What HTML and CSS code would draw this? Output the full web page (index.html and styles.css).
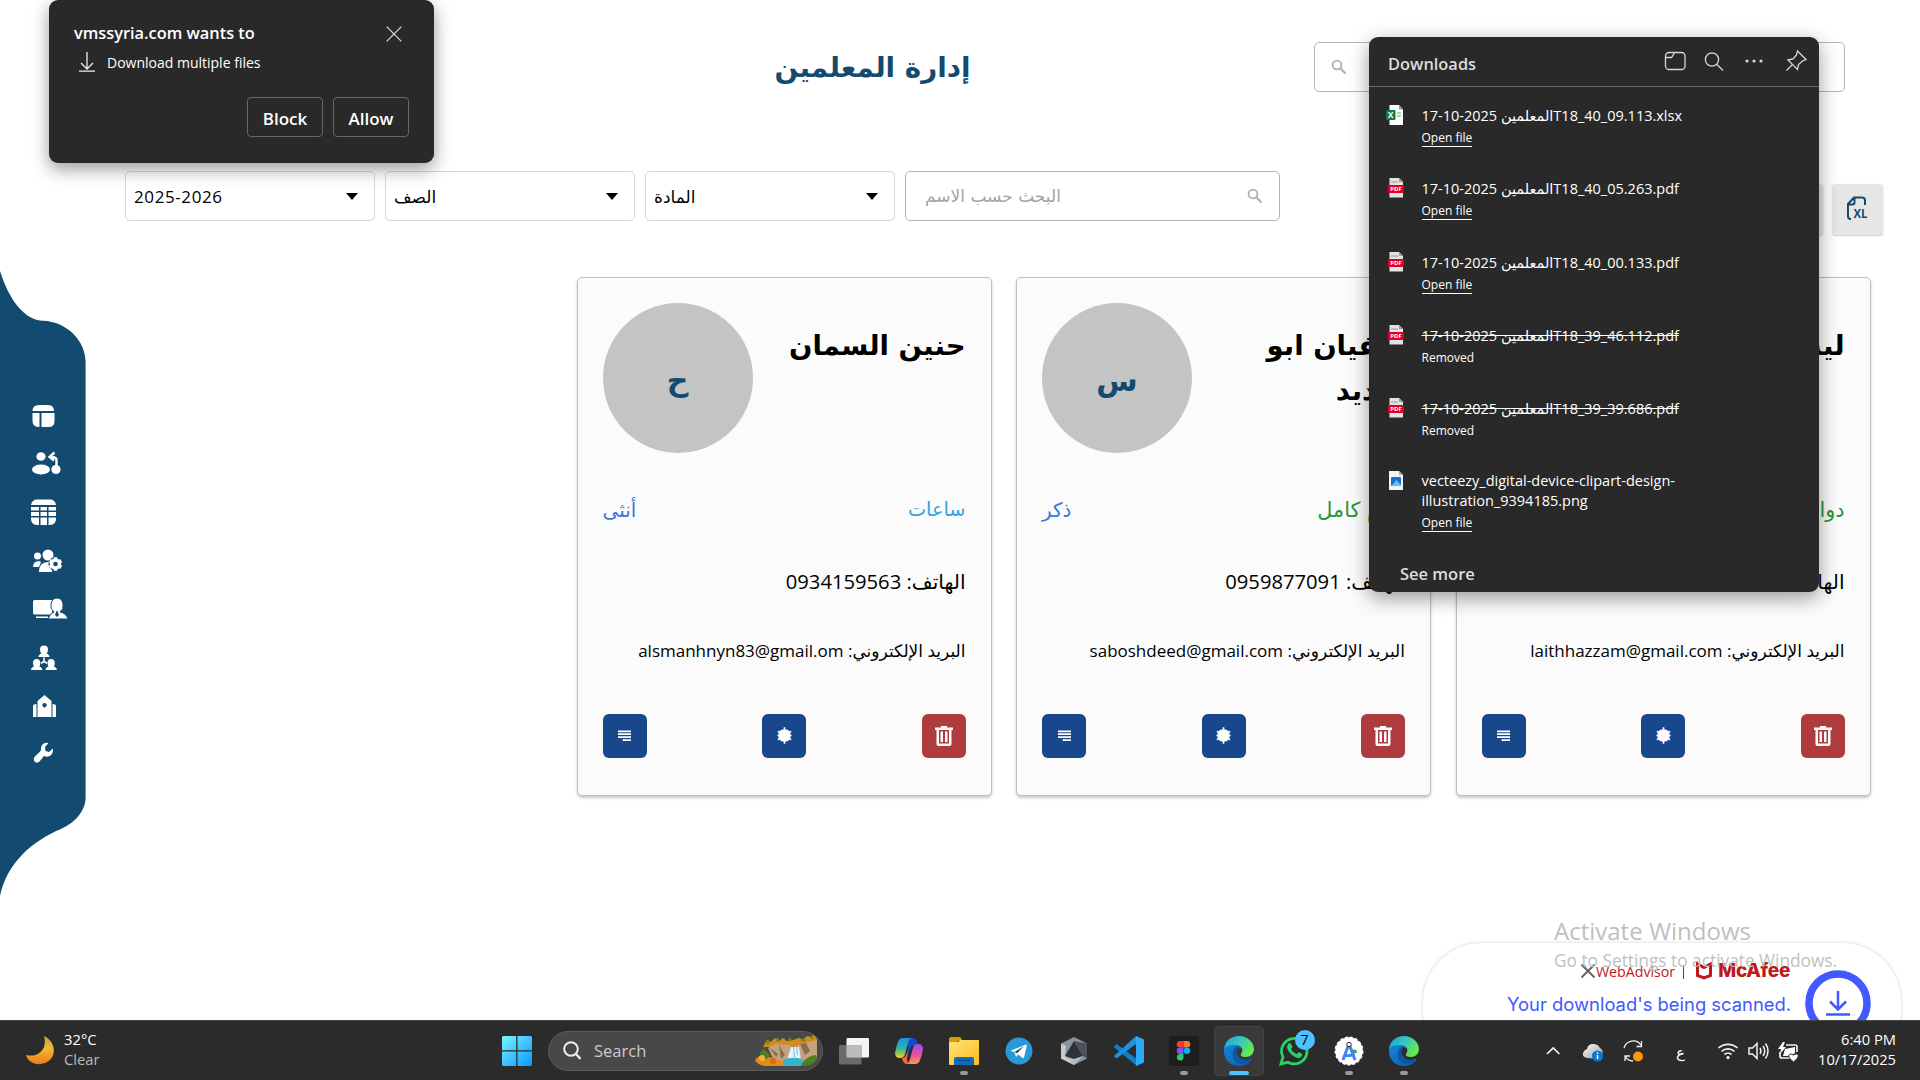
FILE: index.html
```html
<!DOCTYPE html>
<html lang="ar">
<head>
<meta charset="utf-8">
<title>إدارة المعلمين</title>
<link rel="stylesheet" href="styles.css">
</head>
<body>
<svg class="defs" width="0" height="0">
  <defs>
    <linearGradient id="edgeTop" x1="0" y1="0" x2="1" y2=".5"><stop offset="0" stop-color="#1b9de2"/><stop offset=".5" stop-color="#32c6c4"/><stop offset="1" stop-color="#66e94b"/></linearGradient>
    <linearGradient id="edgeLow" x1="0" y1="0" x2="1" y2="1"><stop offset="0" stop-color="#1586d8"/><stop offset="1" stop-color="#0b5cab"/></linearGradient>
    <linearGradient id="winG" x1="0" y1="0" x2="1" y2="1" ><stop offset="0" stop-color="#7af3ff"/><stop offset="1" stop-color="#0a97ff"/></linearGradient>
    <linearGradient id="moonG" x1="0" y1="0" x2="0" y2="1"><stop offset="0" stop-color="#c9a14a"/><stop offset=".45" stop-color="#f3b72c"/><stop offset="1" stop-color="#ee7c1c"/></linearGradient>
    <linearGradient id="foldG" x1="0" y1="0" x2="1" y2="1"><stop offset="0" stop-color="#ffe27a"/><stop offset="1" stop-color="#fdbd1b"/></linearGradient>
    <linearGradient id="copA" x1="0" y1="0" x2="0" y2="1"><stop offset="0" stop-color="#1a90f0"/><stop offset=".5" stop-color="#2fb3a0"/><stop offset="1" stop-color="#f3d21c"/></linearGradient>
    <linearGradient id="copB" x1="0" y1="0" x2="0" y2="1"><stop offset="0" stop-color="#a24be8"/><stop offset=".55" stop-color="#ec4f9c"/><stop offset="1" stop-color="#ff9a4d"/></linearGradient>
    <linearGradient id="cloudG" x1="0" y1="0" x2="1" y2="1"><stop offset="0" stop-color="#fff"/><stop offset="1" stop-color="#9a9a9a"/></linearGradient>
    <symbol id="edge" viewBox="0 0 30 30">
      <path fill="url(#edgeLow)" d="M0 13C4 6 14 6 18 12c-4-2-8 2-6 8 2 5 9 8 16 3C25 28 20 30 15 30 6 30-1 23 0 13Z"/>
      <path fill="#0d57a3" d="M9 15c1-3 4-5 7-5-4 3-5 7-1 11 3 3 8 4 12 1 1 1 0 2-1 3-5 5-20 4-17-10Z"/>
      <path fill="url(#edgeTop)" d="M0 13C1 5 7 0 15 0c9 0 15 7 15 13 0 5-4 8-8 8-4 0-6-1-5-3 3-4 1-9-6-9C6 9 2 10 0 13Z"/>
    </symbol>
    <symbol id="pdf" viewBox="0 0 16 20">
      <path fill="#e3e3e3" d="M1.500 0H11l4 4v15.500H1.500Z"/><path fill="#999" d="M3 3.500h7v1H3zM11 0v4h4Z"/>
      <rect y="7" width="16" height="8" rx="1" fill="#e3001b"/>
      <text x="8" y="13.300" text-anchor="middle" class="pdf-text">PDF</text>
    </symbol>
    <symbol id="trash" viewBox="0 0 18 20"><path fill="#fff" fill-rule="evenodd" d="M6 0h6v1.500h6V4h-1.500v14q0 2-2 2h-11q-2 0-2-2V4H0V1.500h6ZM4 4v13.500h10V4ZM5.500 5.500H8v10.500H5.500ZM10 5.500h2.500v10.500H10Z"/></symbol>
    <symbol id="gear" viewBox="0 0 18 18"><circle cx="9" cy="9" r="6.600" fill="#fff"/><path stroke="#fff" stroke-width="1.800" d="M9 .3v17.400M2 4.500l14 9M16 4.500l-14 9M1.500 9h15M5.500 3l7 12M12.500 3l-7 12"/></symbol>
    <symbol id="lines" viewBox="0 0 14 12"><path stroke="#fff" stroke-width="1.700" d="M0 1h14M0 4h14M0 7.200h14M5 10.400h9"/></symbol>
    <symbol id="mag" viewBox="0 0 16 16"><g fill="none" stroke="currentColor"><circle cx="6" cy="6" r="4.400" stroke-width="1.900"/><path stroke-width="2.300" d="m9.300 9.300 5.200 5.200"/></g></symbol>
  </defs>
</svg>

<div class="desktop">
  <nav class="side">
    <svg class="side-bg" width="88" height="630" viewBox="0 270 88 630"><path fill="#134b70" d="M0 271C9 300 25 320.500 43 320.700 67 321.500 85.600 341 85.600 362V798C85.600 809 77 822 61 829 32 841 7 863 0 896Z"/></svg>
    <svg class="nav-ic" viewBox="0 0 40 30"><path d="M2.500 10Q2.500 4 9 4h9q6 0 6 6Zm0 2H9.500V26Q2.500 26 2.500 20Zm9 0H24.500v8q0 6-6 6h-7Z"/></svg>
    <svg class="nav-ic" viewBox="0 0 40 30"><ellipse cx="11" cy="7.500" rx="4.600" ry="4.300"/><ellipse cx="11" cy="20.500" rx="9" ry="5"/><circle cx="26" cy="20.500" r="4.600"/><path fill="none" stroke="#fff" stroke-width="2.400" d="M26.500 19V11q0-3-6-3m4-4.500L19.500 8l4.500 3.500"/></svg>
    <svg class="nav-ic" viewBox="0 0 40 30"><path d="M1 8Q2 2.500 7 2.500h13q5 0 6 5.500ZM1 10h8v3.500H1zm9.500 0h6.500v3.500h-6.500zm8 0H26v3.500h-7.500zM1 15h8v4H1zm9.500 0h6.500v4h-6.500zm8 0H26v4h-7.500zM1 20.500h8V28H7q-6-.5-6-6zm9.500 0h6.500V28h-6.500zm8 0H26V22q0 5.500-6 6h-1.500z"/></svg>
    <svg class="nav-ic" viewBox="0 0 40 30"><circle cx="7.500" cy="10" r="3.500"/><circle cx="18" cy="9" r="5.500"/><path d="M3 21q0-6 6-6l2 1-2 5ZM9 26q0-10 9-10h4v10Z"/><g fill="none"><circle cx="25.500" cy="18" r="6.300" stroke="#134b70" stroke-width="1.500"/><circle cx="25.500" cy="18" r="4" stroke="#fff" stroke-width="3.400"/><path stroke="#fff" stroke-width="3.600" d="M25.500 11.300v2.400m0 8.600v2.400M19.700 14.700l2 1.100m7.600 4.400 2 1.100M19.700 21.300l2-1.100m7.600-4.400 2-1.100"/></g></svg>
    <svg class="nav-ic" viewBox="0 0 40 30"><path d="M4.500 6H22v14.500H4.500Q3 20.500 3 19V7.500Q3 6 4.500 6ZM6 22.500h12V24H6Z"/><path stroke="#134b70" d="M18 25q2-6 6-7-4-3-3-8 1-6 6-6t6 6q1 5-3 8 6 1 8 7Z"/><path fill="#134b70" d="m27 16 2 5-2 2-2-2Z"/></svg>
    <svg class="nav-ic" viewBox="0 0 40 30"><path d="M14 3.500q4 0 4 4 0 3-1.500 4 3 1 3 3.500h-11q0-2.500 3-3.500Q10 10.500 10 7.500q0-4 4-4Z"/><path d="M6.500 17q3.800 0 3.800 4 0 2.500-1 3.500 3 1 3 3.500H1q0-2.500 3-3.500-1-1-1-3.500 0-4 3.500-4Zm14.500 0q3.800 0 3.800 4 0 2.500-1 3.500 3 1 3 3.500H15.500q0-2.500 3-3.500-1-1-1-3.500 0-4 3.500-4Z"/><path fill="none" stroke="#fff" stroke-width="1.600" d="M14 15.500v4l-3 1.700m3-1.700 3 1.700"/></svg>
    <svg class="nav-ic" viewBox="0 0 40 30"><path fill-rule="evenodd" d="M7.500 27V11L14.500 5l7 6v16ZM14.500 13a2.200 2.200 0 1 0 .01 0ZM3 16q0-2 3.500-2v13H3Zm19.500-2q3.500 0 3.500 2v11h-3.500Z"/></svg>
    <svg class="nav-ic" viewBox="0 0 40 30"><path d="M18.500 5Q14 4 11.500 8q-1 2-.5 4.500L4.500 19q-2 4 1.500 5.500 2 .5 3.500-1L14 18q5 2 8-2 1.500-2.500 1-5.500l-4 3.500-3.500-1-.5-4Z"/></svg>
  </nav>

  <main class="main">
    <header class="top">
      <div class="title-wrap"><h1 class="title">إدارة المعلمين</h1></div>
      <div class="top-search"><svg class="mag" width="16" height="16"><use href="#mag"/></svg></div>
    </header>
    <section class="filters">
      <div class="select"><span class="num">2025-2026</span><i class="caret"></i></div>
      <div class="select"><span class="ar">الصف</span><i class="caret"></i></div>
      <div class="select"><span class="ar">المادة</span><i class="caret"></i></div>
      <div class="search"><span class="ar">البحث حسب الاسم</span><svg class="mag" width="16" height="16"><use href="#mag"/></svg></div>
      <div class="exports">
        <div class="export"></div>
        <div class="export"><svg width="24" height="26" viewBox="0 0 24 26"><path fill="none" stroke="#134b70" stroke-width="2" d="M6 24H5.500Q3 24 3 21V9L9 2.500H17q3 0 3 3V10M3 9.500h4.500q2 0 2-2V3"/><text x="8.500" y="22.500" class="xl" textLength="14" lengthAdjust="spacingAndGlyphs">XL</text></svg></div>
      </div>
    </section>
    <section class="cards">
      <article class="card">
        <div class="head"><div class="avatar"><span>ح</span></div><h2 class="name">حنين السمان</h2></div>
        <div class="tags"><span class="gender">أنثى</span><span class="hours">ساعات</span></div>
        <p class="phone">الهاتف: <span class="tel">0934159563</span></p>
        <p class="mail">البريد الإلكتروني: <span class="addr">alsmanhnyn83@gmail.om</span></p>
        <div class="actions"><b class="btn"><svg width="13" height="12"><use href="#lines"/></svg></b><b class="btn"><svg width="17" height="17"><use href="#gear"/></svg></b><b class="btn del"><svg width="18" height="20"><use href="#trash"/></svg></b></div>
      </article>
      <article class="card">
        <div class="head"><div class="avatar"><span>س</span></div><h2 class="name">سفيان ابو<br>شديد</h2></div>
        <div class="tags"><span class="gender">ذكر</span><span class="full">دوام كامل</span></div>
        <p class="phone">الهاتف: <span class="tel">0959877091</span></p>
        <p class="mail">البريد الإلكتروني: <span class="addr">saboshdeed@gmail.com</span></p>
        <div class="actions"><b class="btn"><svg width="13" height="12"><use href="#lines"/></svg></b><b class="btn"><svg width="17" height="17"><use href="#gear"/></svg></b><b class="btn del"><svg width="18" height="20"><use href="#trash"/></svg></b></div>
      </article>
      <article class="card">
        <div class="head"><div class="avatar"><span>ل</span></div><h2 class="name">ليث</h2></div>
        <div class="tags"><span class="gender">ذكر</span><span class="full">دوام كامل</span></div>
        <p class="phone">الهاتف:</p>
        <p class="mail">البريد الإلكتروني: <span class="addr">laithhazzam@gmail.com</span></p>
        <div class="actions"><b class="btn"><svg width="13" height="12"><use href="#lines"/></svg></b><b class="btn"><svg width="17" height="17"><use href="#gear"/></svg></b><b class="btn del"><svg width="18" height="20"><use href="#trash"/></svg></b></div>
      </article>
    </section>
  </main>

  <aside class="mcafee">
    <div class="mc-col">
      <div class="mc-brand">
        <svg width="14" height="14" viewBox="0 0 14 14"><path stroke="#666" stroke-width="2" d="m.5.5 13 13M13.500.5l-13 13"/></svg>
        <span class="wa">WebAdvisor</span><i class="bar"></i>
        <svg class="shield" width="16" height="18" viewBox="0 0 16 18"><path fill="none" stroke="#c01818" stroke-width="3" d="M1.500 2v11.500L8 16l6.500-2.500V2L8 5.500Z"/></svg>
        <span class="mc">McAfee</span>
      </div>
      <div class="scan">Your download's being scanned.</div>
    </div>
    <svg class="ring" width="66" height="66" viewBox="0 0 66 66"><g fill="none" stroke="#4159ff"><circle cx="33" cy="33" r="29" stroke-width="7.500"/><path stroke-width="2.500" d="M33 21v18m-8-7.500 8 8 8-8M21 44.500h24"/></g></svg>
  </aside>

  <aside class="activate"><div class="act1">Activate Windows</div><div class="act2">Go to Settings to activate Windows.</div></aside>

  <aside class="perm">
    <div class="perm-top"><span class="perm-title">vmssyria.com wants to</span><svg width="16" height="16" viewBox="0 0 16 16"><path stroke="#ddd" stroke-width="1.200" d="m.7.7 14.600 14.600M15.300.7.7 15.300"/></svg></div>
    <div class="perm-line"><svg width="16" height="20" viewBox="0 0 16 20"><path fill="none" stroke="#eee" stroke-width="1.300" d="M8 0v17M2 11l6 6 6-6M0 19.200h16"/></svg><span>Download multiple files</span></div>
    <div class="perm-btns"><button>Block</button><button>Allow</button></div>
  </aside>

  <aside class="dl">
    <div class="dl-head"><span class="dl-title">Downloads</span>
      <svg width="150" height="26" viewBox="0 0 150 26"><g fill="none" stroke="#d8d8d8" stroke-width="1.300">
        <rect x="4.500" y="3.500" width="19.500" height="17" rx="3.500"/><path d="M4.500 8.500h6l3-4.500"/>
        <circle cx="51" cy="10.500" r="6.600"/><path d="m56 15.500 6 6"/>
        <path d="m136.500 2 8.500 8.500-3.500 1.500-4 3.500-1 5-9.500-9.500 5-1 3.500-4ZM131 16l-5.500 5.500"/></g>
        <g fill="#d8d8d8"><circle cx="86" cy="12" r="1.600"/><circle cx="93" cy="12" r="1.600"/><circle cx="100" cy="12" r="1.600"/></g></svg>
    </div>
    <div class="item"><svg width="18" height="20" viewBox="0 0 18 20"><path fill="#fff" d="M3.500 0H13l4 4.500V20H3.500Z"/><path fill="#999" d="M13 0v4.500h4Z"/><path stroke="#8cc5a0" stroke-width="1.500" d="M11 8h4m-4 3h4"/><rect y="5" width="9.500" height="10" rx="1" fill="#107c41"/><text x="1.700" y="13" class="xls-text">X</text></svg><div><div class="fn">17-10-2025 المعلمينT18_40_09.113.xlsx</div><a>Open file</a></div></div>
    <div class="item"><svg width="16" height="20"><use href="#pdf"/></svg><div><div class="fn">17-10-2025 المعلمينT18_40_05.263.pdf</div><a>Open file</a></div></div>
    <div class="item"><svg width="16" height="20"><use href="#pdf"/></svg><div><div class="fn">17-10-2025 المعلمينT18_40_00.133.pdf</div><a>Open file</a></div></div>
    <div class="item"><svg width="16" height="20"><use href="#pdf"/></svg><div><div class="fn gone">17-10-2025 المعلمينT18_39_46.112.pdf</div><em>Removed</em></div></div>
    <div class="item"><svg width="16" height="20"><use href="#pdf"/></svg><div><div class="fn gone">17-10-2025 المعلمينT18_39_39.686.pdf</div><em>Removed</em></div></div>
    <div class="item last"><svg width="16" height="20" viewBox="0 0 16 20"><path fill="#f4f4f4" d="M1 0h10l4 4v15H1Z"/><path fill="#aaa" d="M11 0v4h4Z"/><rect x="3" y="6" width="10" height="9" rx="1" fill="#1b6fd0"/><path fill="#5cc3f5" d="m3.500 15 5-6 4.500 5v1Z"/></svg><div><div class="fn">vecteezy_digital-device-clipart-design-<br>illustration_9394185.png</div><a>Open file</a></div></div>
    <div class="more">See more</div>
  </aside>
</div>

<footer class="taskbar">
  <div class="weather"><svg width="28" height="30" viewBox="0 0 28 30"><path fill="url(#moonG)" d="M18 0c13 6 13 23 1 27C11 30 2 27 0 19c12 3 22-6 18-19Z"/></svg><div><div class="deg">32°C</div><div class="clear">Clear</div></div></div>
  <svg class="start" width="30" height="30" viewBox="0 0 30 30"><path fill="url(#winG)" d="M1.500 0H14.200V14.200H0V1.500Q0 0 1.500 0ZM15.500 0H28.500Q30 0 30 1.500V14.200H15.500ZM0 15.500H14.200V30H1.500Q0 30 0 28.500ZM15.500 15.500H30V28.500Q30 30 28.500 30H15.500Z"/></svg>
  <div class="tb-search"><svg width="18" height="19" viewBox="0 0 18 19"><circle cx="8" cy="8" r="6.800" fill="none" stroke="#eee" stroke-width="2"/><path stroke="#eee" stroke-width="2.400" d="m13 13 4.500 5"/></svg><span>Search</span>
    <svg class="falls" width="63" height="31" viewBox="0 0 63 31"><path fill="#d98a1e" d="M8 12 12 5l4 2 4-4 4 3 4-3 4 3 6-1 6-2 4 2 4-4 4 1 3-2 3 4v8H10Z"/><path fill="#6b8b25" d="M11 6l2-2 2 4-3 2Zm10 0 2-4 2 5Zm25 0 3-4 2 5Zm9-3 2-3 2 5ZM33 5l2-3 2 4Z"/><path fill="#c3a27e" d="M13 13 20 9l14 1 4 3 5-3 10-3 9-2v17l-10 6H20Z"/><path fill="#8d6a50" d="m24 10 6 10-4 4ZM45 9l5 11 5-4-4-8ZM15 13l6 9 2-3Z"/><path fill="#dff3fa" d="M36 12h8l2 13H32Z"/><path fill="#7cc3dc" d="m38 12 1 10h1l-1-10Zm3 0 1 8h1l-1-8Z"/><path fill="#35b4cc" d="M28 25q9-4 19-1l3 7H28Z"/><path fill="#e58b17" d="M0 25q3-4 8-5l10 3 10 4 1 4H10Q2 30 0 25Z"/><path fill="#4f7d22" d="M5 18q3-5 5-3l5 5-3 4-6-1Zm43 9q6-7 13-7l1 4q-4 8-16 7Z"/><circle cx="7" cy="23" r="3" fill="#f4b335"/><circle cx="18" cy="26" r="3" fill="#d96d10"/></svg>
  </div>
  <div class="apps">
    <div class="app"><svg width="30" height="30" viewBox="0 0 30 30"><rect x="7.500" y="2" width="22.500" height="19.500" rx="1" fill="#f4f4f4"/><rect y="9" width="22.500" height="19.500" rx="1" fill="#777" opacity=".85"/><path fill="#bbb" d="M7.500 9h15v12.500h-15Z"/></svg></div>
    <div class="app"><svg width="28" height="26" viewBox="0 0 28 26"><path fill="#1748c9" d="M13 0h5q3 0 4 4l1 4h-5q-2 0-3 3L13 18Z"/><path fill="url(#copA)" d="M8 0h9q-3 1-4 5l-3 11q-1 4-5 4Q0 20 0 15 1 9 3 4 4 0 8 0Z"/><path fill="url(#copB)" d="M20 26h-9q3-1 4-5l3-11q1-4 5-4 5 0 5 5-1 6-3 11-1 4-5 4Z"/><path fill="#f2683f" d="M7 20q3 0 4-3l2-5-1 9q0 5 4 5h-5q-3-1-4-6Z"/></svg></div>
    <div class="app run"><svg width="30" height="28" viewBox="0 0 30 28"><path fill="#dc9a05" d="M0 1.500Q0 0 2 0h9l3 4h-5l-2 3H0Z"/><path fill="url(#foldG)" d="M0 5h9l3-2h18v24q0 1-1 1H1q-1 0-1-1Z"/><path fill="#0f6cbd" d="M5 28v-6q0-2 2-2h16q2 0 2 2v6Z"/><path stroke="#0a4a8a" stroke-width="1.200" d="M9 23.500h12"/></svg></div>
    <div class="app"><svg width="28" height="28" viewBox="0 0 28 28"><circle cx="14" cy="14" r="13.500" fill="#2699d6"/><path fill="#fff" d="m6 13.500 15-6q1 0 .7 1.300L19 20.500q-.6 1-1.700.2L13 17.500l-2 2.500-1.500-5-3.500-1Z"/><path stroke="#2699d6" d="m10 15 8-5-6 6"/></svg></div>
    <div class="app"><svg width="26" height="28" viewBox="0 0 26 28"><path fill="#8b929b" d="M13 0 26 6.500v15L13 28 0 21.500v-15Z"/><path fill="#2d333b" d="M13 4 22 19 13 22 4 19Z"/><path fill="#c4cad0" d="M0 6.500 5 9 4 19l9 9L0 21.500Z"/><path fill="#4b525b" d="M26 6.500 13 4l9 15 4 2.500Z"/><path fill="#e3e6e9" d="m4 20 9 2 9-3-9 9Z" opacity=".5"/></svg></div>
    <div class="app"><svg width="30" height="30" viewBox="0 0 30 30"><path fill="#0e7fce" d="M0 10.500 2.500 8 23 23v7L1 12Z"/><path fill="#1b93e0" d="M0 20 22 0v8L2.500 22.500Z"/><path fill="#2fa8f5" d="M22 0l7 3q1 .5 1 1.500v21q0 1-1 1.500l-7 3Z"/></svg></div>
    <div class="app run"><svg width="30" height="30" viewBox="0 0 30 30"><rect width="30" height="30" rx="2" fill="#1e1e1e"/><path fill="#ff3737" d="M11 5h3.500v6.500H11A3.200 3.200 0 0 1 11 5Z"/><path fill="#ff7237" d="M14.500 5H18a3.200 3.200 0 0 1 0 6.500h-3.500Z"/><path fill="#874fff" d="M11 11.500h3.500V18H11a3.200 3.200 0 0 1 0-6.500Z"/><circle cx="18" cy="14.700" r="3.200" fill="#00b6ff"/><path fill="#24cb71" d="M11 18h3.500v3.500A3.300 3.300 0 1 1 11 18Z"/></svg></div>
    <div class="app active"><svg width="30" height="30"><use href="#edge"/></svg></div>
    <div class="app"><svg width="30" height="30" viewBox="0 0 30 30"><path fill="none" stroke="#25d366" stroke-width="2.800" d="M2 28 4 21A12.700 12.700 0 1 1 9 26.200Z"/><path fill="#25d366" d="M9 8q2-2 3 0l1.500 3-1.500 2q2 4 6 5l2-2 3 2q1 1-1 3-3 3-9-2-7-6-4-11Z"/></svg><span class="badge">7</span></div>
    <div class="app run"><svg width="30" height="30" viewBox="0 0 30 30"><circle cx="15" cy="15" r="13.700" fill="#fff" stroke="#fff" stroke-width="1.500" stroke-dasharray="3 2"/><path fill="#34a853" d="M18 14q5-2 5 3h-4Z"/><g fill="none" stroke="#4285f4" stroke-width="3"><path d="M14.500 9 9 24M15.500 9 21 24M9.500 18.500q5.500 3 11-1"/></g><circle cx="15" cy="8.500" r="2.200" fill="#fff" stroke="#222"/></svg></div>
    <div class="app run"><svg width="30" height="30"><use href="#edge"/></svg></div>
  </div>
  <svg class="tray" width="265" height="40" viewBox="1540 0 265 40"><g fill="none" stroke="#f2f2f2" stroke-width="1.700">
    <path d="m1547 23 6.200-6 6.200 6"/>
    <path d="M1624 17a9.500 9.500 0 0 1 17-3m.5-4v5.500h-5M1625 30v-5h5m-5 0a9.500 9.500 0 0 0 8 5" stroke-width="1.300"/>
    <path d="M1718.500 17a14 14 0 0 1 19 0M1721.500 20.500a9.500 9.500 0 0 1 13 0M1724.500 23.500a5.200 5.200 0 0 1 7 0"/>
    <path stroke-width="1.500" d="M1749 17h3.500l4.500-4.500v15l-4.500-4.500H1749ZM1760 17q2 3 0 6M1763 15q3.500 5 0 10M1765.500 12.500q5 7.500 0 15"/>
    <path d="M1786 14h9q2 0 2 2v5M1780 21v4q0 2 2 2h8"/></g>
    <circle cx="1728" cy="26.500" r="1.600" fill="#fff"/>
    <path fill="#fff" d="m1783 11-5 7h3l-1 5 6-7h-3l2-5ZM1785 18l10-2v6l-5 3h-7Z"/><path fill="#fff" stroke="#2b2a2e" d="M1793.500 31q-5-4-5-6.500 2-3 5-.5 3-2.500 5 .5 0 2.500-5 6.500Z"/>
    <path fill="url(#cloudG)" d="M1587 27q-5-1-4-5 1-3 4-4 1-5 6-5t7 4q4 2 2 7l-4 4Z"/>
    <circle cx="1597.500" cy="25" r="5.600" fill="#0b78d0"/><path stroke="#fff" stroke-width="1.500" d="M1597.500 24v4m0-6.500v1.500"/>
    <circle cx="1638" cy="25.500" r="5" fill="#f9960c"/>
    <text x="1676" y="27" class="lang">ع</text>
  </svg>
  <div class="clock"><div>6:40 PM</div><div>10/17/2025</div></div>
</footer>
</body>
</html>
```
FILE: styles.css
```css
* { box-sizing: border-box; }
body { margin: 0; width: 1920px; height: 1080px; overflow: hidden; display: flex; flex-direction: column; background: #fff; font-family: "Open Sans", "DejaVu Sans", sans-serif; color: #000; }
.defs { position: absolute; }
svg { display: block; flex: none; }
h1, h2, p { margin: 0; }
.desktop { position: relative; display: flex; height: 1020px; overflow: hidden; }

.side { position: relative; width: 86px; padding: 392px 0 0 30px; }
.side-bg { position: absolute; left: 0; top: 270px; }
.nav-ic { position: relative; width: 40px; height: 30px; margin: 9px 0 18.200px; fill: #fff; }

.main { flex: 1; padding: 42px 37px 0 39px; }
.top { display: flex; height: 50px; padding-left: 306px; }
.title-wrap { width: 883px; display: flex; justify-content: center; }
.title { font-family: "DejaVu Sans", sans-serif; font-size: 27.800px; line-height: 52px; font-weight: 700; color: #134b70; direction: rtl; white-space: nowrap; }
.top-search { width: 531px; height: 50px; border: 1px solid #b5b5b5; border-radius: 5px; padding: 16px; }
.mag { color: #b0b0b0; }
.filters { display: flex; gap: 10px; height: 64px; margin-top: 79px; }
.select, .search { display: flex; align-items: center; justify-content: space-between; height: 50px; border: 1px solid #d8d8d8; border-radius: 5px; }
.select { width: 250px; padding: 1px 16px 0 8px; font-size: 17px; }
.num { letter-spacing: .6px; }
.caret { border: 6px solid transparent; border-top: 7px solid #000; border-bottom: 0; }
.search { width: 375px; border-color: #b5b5b5; padding: 0 16px 0 19px; color: #a3a3a3; font-size: 17px; }
.ar { font-family: "DejaVu Sans", sans-serif; }
.exports { display: flex; gap: 9px; margin: 13px 0 0 auto; }
.export { width: 51px; height: 51px; border-radius: 4px; background: #e6e6e6; box-shadow: 0 1px 2px #ccc; padding: 11px 13px; }
.xl { font: 700 13px "Open Sans", sans-serif; fill: #134b70; }

.cards { display: flex; gap: 24.500px; margin: 42px 12.500px 0 0; justify-content: flex-end; }
.card { width: 415px; height: 519px; padding: 25px; background: #fbfbfb; border: 1px solid #bfbfbf; border-radius: 5px; box-shadow: 0 2px 3px rgba(0,0,0,.22); font-family: "Open Sans", "DejaVu Sans", sans-serif; }
.head { display: flex; justify-content: space-between; height: 150px; }
.avatar { width: 150px; height: 150px; border-radius: 50%; background: #c4c4c4; display: flex; align-items: center; justify-content: center; font: 700 30px "DejaVu Sans", sans-serif; color: #134b70; padding-top: 4px; }
.name { direction: rtl; font: 700 27.500px/45px "DejaVu Sans", sans-serif; padding-top: 20px; white-space: nowrap; }
.tags { display: flex; justify-content: space-between; height: 36px; margin-top: 39px; font: 20px/36px "DejaVu Sans", sans-serif; }
.gender { color: #3d78d8; }
.hours { color: #35a3df; font-size: 19.300px; }
.full { color: #23963c; direction: rtl; font-size: 20.800px; }
.phone, .mail { direction: rtl; white-space: nowrap; height: 36px; line-height: 36px; }
.phone { font-size: 20.200px; margin-top: 35px; }
.mail { font-size: 17px; margin-top: 34px; }
.actions { display: flex; justify-content: space-between; margin-top: 44.500px; }
.btn { width: 44px; height: 44px; border-radius: 6px; background: #18478c; display: flex; align-items: center; justify-content: center; }
.del { background: #ae3b3d; }

.mcafee { position: absolute; left: 1422px; top: 942px; width: 480px; height: 130px; border-radius: 60px; background: #fff; border: 1px solid #eee; box-shadow: 0 0 3px rgba(0,0,0,.12); display: flex; padding: 17px 30px 0 0; justify-content: flex-end; }
.mc-col { width: 298px; }
.mc-brand { display: flex; align-items: center; height: 20px; padding-left: 74px; }
.mc-brand svg { margin-top: 2px; }
.wa { margin-left: 1px; font-size: 14.200px; color: #c01818; margin-top: 3px; }
.bar { width: 1px; height: 14px; background: #c01818; margin: 3px 12px 0 8px; }
.shield { margin-right: 6px; }
.mc { font: 800 19px Inter, sans-serif; color: #c01818; letter-spacing: -.2px; }
.scan { margin-top: 11px; font: 18.400px/26px Inter, sans-serif; color: #4159ff; white-space: nowrap; }
.ring { margin-top: 10px; }

.activate { position: absolute; left: 1554px; top: 914px; color: #bfbfbf; white-space: nowrap; }
.act1 { font-size: 24px; line-height: 34px; }
.act2 { font-size: 17.300px; line-height: 25px; }

.perm { position: absolute; left: 49px; top: 0; width: 385px; height: 163px; border-radius: 9px; background: #292929; color: #fff; box-shadow: 0 6px 18px rgba(0,0,0,.4); padding: 22px 25px; }
.perm-top { display: flex; justify-content: space-between; height: 30px; padding-right: 7px; }
.perm-top svg { margin-top: 4px; }
.perm-title { font-size: 16.350px; font-weight: 600; line-height: 22px; white-space: nowrap; }
.perm-line { display: flex; height: 20px; gap: 12px; padding-left: 5px; font-size: 14px; line-height: 22px; }
.perm-btns { display: flex; justify-content: flex-end; gap: 10px; margin-top: 25px; }
.perm-btns button { width: 76px; height: 40px; border: 1px solid #666; border-radius: 4px; background: #292929; color: #fff; font: 600 17px "Open Sans", sans-serif; padding: 3px 0 0; }

.dl { position: absolute; left: 1369px; top: 37px; width: 450px; height: 555px; border-radius: 9px; background: #292929; color: #fff; box-shadow: 0 6px 20px rgba(0,0,0,.4); }
.dl-head { display: flex; justify-content: space-between; height: 50px; border-bottom: 1px solid #686868; padding: 12px 8px 0 19px; margin-bottom: 17px; }
.dl-title { font-size: 16.400px; font-weight: 600; color: #ddd; line-height: 30px; }
.item { display: flex; height: 73.300px; padding-left: 19px; }
.item > svg { margin-top: 1px; }
.item > svg[width="18"] { margin-left: -2px; }
.item > div { margin-left: 17.500px; }
.fn { font-size: 14.500px; line-height: 20px; height: 22px; white-space: nowrap; margin-top: 2px; }
.last .fn { height: 42px; margin-top: 1px; }
.gone { text-decoration: line-through; }
.item a, .item em { display: block; width: max-content; font-size: 12px; line-height: 17px; font-style: normal; margin-top: 1px; }
.item a { border-bottom: 1px solid #fff; }
.more { margin: 18px 0 0 31px; font-size: 16.500px; font-weight: 600; color: #ddd; line-height: 24px; }
.pdf-text { font: 700 6px "Open Sans", sans-serif; fill: #fff; }
.xls-text { font: 700 8.500px "Open Sans", sans-serif; fill: #fff; }

.taskbar { position: relative; display: flex; align-items: center; height: 60px; background: #2b2b2b; border-top: 1px solid #484848; color: #fff; }
.taskbar > * { flex: none; }
.weather { display: flex; gap: 10px; width: 476px; padding-left: 26px; font-size: 14.800px; line-height: 20px; margin: -4px 26px 0 0; }
.weather svg { margin-top: 7px; }
.clear { color: #bbb; }
.start { margin-right: 16px; }
.tb-search { display: flex; align-items: center; width: 275px; height: 40px; border-radius: 20px; background: #484848; border: 1px solid #5c5c5c; padding: 0 4px 0 14px; font-size: 16.500px; color: #ccc; }
.tb-search span { margin-left: 13px; }
.falls { margin-left: auto; }
.apps { display: flex; margin-left: 3px; }
.app { position: relative; width: 50px; height: 50px; margin: 0 2.500px; border-radius: 5px; display: flex; align-items: center; justify-content: center; }
.run::after, .active::after { content: ""; position: absolute; bottom: 1px; width: 8px; height: 4px; border-radius: 2px; background: #999; }
.active { background: #393939; box-shadow: inset 0 0 0 1px #444; }
.active::after { width: 20px; background: #4cc2ff; }
.badge { position: absolute; left: 26px; top: 4px; width: 20px; height: 20px; border-radius: 50%; background: #4cc2ff; color: #000; font-size: 14px; line-height: 20px; text-align: center; }
.tray { margin-left: 109px; }
.lang { font: 15px "DejaVu Sans", sans-serif; fill: #fff; }
.clock { margin: -4px 24px 0 auto; text-align: right; font-size: 14.700px; line-height: 20px; white-space: nowrap; }
```
